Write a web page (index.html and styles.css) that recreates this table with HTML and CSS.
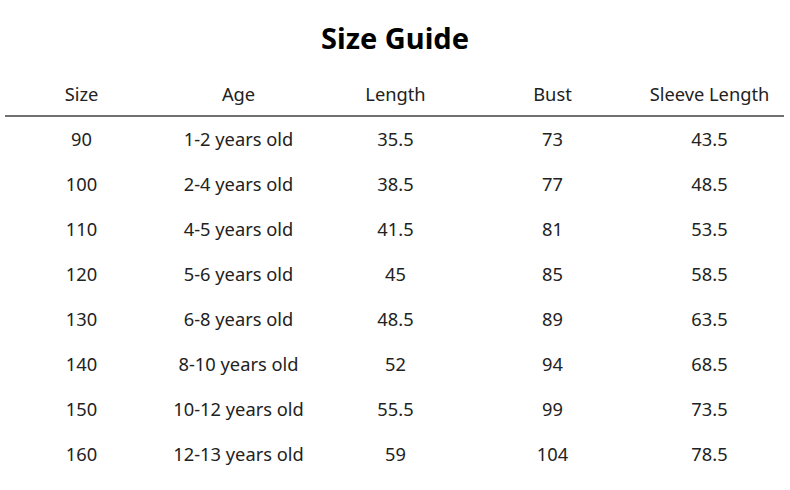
FILE: index.html
```html
<!DOCTYPE html>
<html>
<head>
<meta charset="utf-8">
<link rel="stylesheet" href="styles.css">
</head>
<body>
<div class="page">
  <h1 class="title">Size Guide</h1>
  <div class="table">
    <div class="row head">
      <div class="cell">Size</div><div class="cell">Age</div><div class="cell">Length</div><div class="cell">Bust</div><div class="cell">Sleeve Length</div>
    </div>
    <div class="rule"></div>
    <div class="row"><div class="cell">90</div><div class="cell">1-2 years old</div><div class="cell">35.5</div><div class="cell">73</div><div class="cell">43.5</div></div>
    <div class="row"><div class="cell">100</div><div class="cell">2-4 years old</div><div class="cell">38.5</div><div class="cell">77</div><div class="cell">48.5</div></div>
    <div class="row"><div class="cell">110</div><div class="cell">4-5 years old</div><div class="cell">41.5</div><div class="cell">81</div><div class="cell">53.5</div></div>
    <div class="row"><div class="cell">120</div><div class="cell">5-6 years old</div><div class="cell">45</div><div class="cell">85</div><div class="cell">58.5</div></div>
    <div class="row"><div class="cell">130</div><div class="cell">6-8 years old</div><div class="cell">48.5</div><div class="cell">89</div><div class="cell">63.5</div></div>
    <div class="row"><div class="cell">140</div><div class="cell">8-10 years old</div><div class="cell">52</div><div class="cell">94</div><div class="cell">68.5</div></div>
    <div class="row"><div class="cell">150</div><div class="cell">10-12 years old</div><div class="cell">55.5</div><div class="cell">99</div><div class="cell">73.5</div></div>
    <div class="row"><div class="cell">160</div><div class="cell">12-13 years old</div><div class="cell">59</div><div class="cell">104</div><div class="cell">78.5</div></div>
  </div>
</div>
</body>
</html>
```
FILE: styles.css
```css
html, body {
  margin: 0;
  padding: 0;
  background: #fff;
}
.page {
  width: 790px;
  height: 490px;
  font-family: "Noto Sans", "Open Sans", sans-serif;
  color: #222;
}
.title {
  margin: 0;
  padding-top: 18px;
  height: 44px;
  line-height: 40px;
  text-align: center;
  font-size: 29px;
  font-weight: 700;
  color: #000;
}
.table {
  padding: 0 2px 0 3px;
  margin-top: 11px;
}
.row {
  display: grid;
  grid-template-columns: repeat(5, 157px);
  height: 45px;
  align-items: center;
}
.row.head {
  height: 41px;
}
.cell {
  text-align: center;
  font-size: 18.3px;
  line-height: 24px;
}
.rule {
  margin: 1px 0 -1px 2px;
  width: 779px;
  height: 2px;
  background: #707070;
}
```
